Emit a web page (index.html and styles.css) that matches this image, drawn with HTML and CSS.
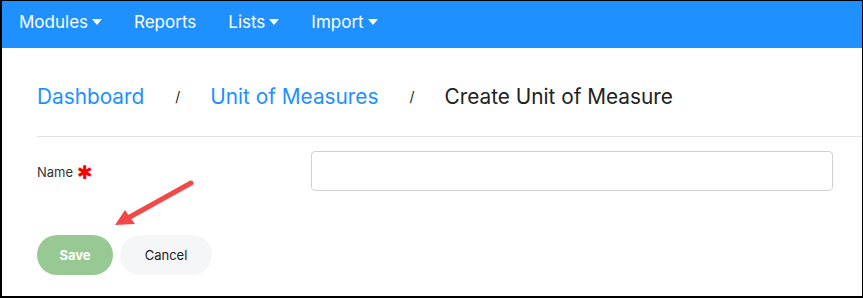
FILE: index.html
```html
<!DOCTYPE html>
<html lang="en">
<head>
    <meta charset="UTF-8">
    <title>Create Unit of Measure</title>
    <link rel="stylesheet" href="styles.css">
</head>
<body>
    <div class="frame">
        <div class="topbar">
            <span class="menu">Modules <i class="caret"></i></span>
            <span class="menu">Reports</span>
            <span class="menu">Lists <i class="caret"></i></span>
            <span class="menu">Import <i class="caret"></i></span>
        </div>

        <div class="content">
            <div class="crumbs">
                <a class="crumb">Dashboard</a>
                <span class="sep">/</span>
                <a class="crumb">Unit of Measures</a>
                <span class="sep">/</span>
                <span class="current">Create Unit of Measure</span>
            </div>

            <div class="form-row">
                <label class="label">Name <b class="req">✱</b></label>
                <input class="field" type="text">
            </div>

            <div class="actions">
                <button class="btn save">Save</button>
                <button class="btn cancel">Cancel</button>
            </div>
        </div>

        <!-- annotation arrow -->
        <svg class="arrow" width="100" height="60" viewBox="0 0 100 60">
            <line x1="89" y1="12" x2="26" y2="47" stroke="#f34848" stroke-width="5" stroke-linecap="round"/>
            <polygon points="13,54 23,39 33,53" fill="#f34848"/>
        </svg>
    </div>
</body>
</html>
```

FILE: styles.css
```css
body{
    margin: 0;
    font-family: "Inter", "Liberation Sans", sans-serif;
}

.frame{
    position: relative;
    width: 860px;
    height: 295px;
    border: 1px solid #000;
    border-left-width: 2px;
    border-bottom-width: 2px;
    background-color: #fff;
    overflow: hidden;
}

.topbar{
    height: 41px;
    padding-bottom: 6px;
    background-color: #1e90ff;
    display: flex;
    align-items: center;
    padding-left: 17px;
}
.menu{
    color: #fff;
    font-size: 17px;
    margin-right: 32px;
    display: flex;
    align-items: center;
}
.caret{
    display: inline-block;
    margin-left: 4px;
    border-top: 6px solid #fff;
    border-left: 5px solid transparent;
    border-right: 5px solid transparent;
}

.content{
    padding-left: 35px;
}

.crumbs{
    height: 80px;
    padding-top: 8px;
    display: flex;
    align-items: center;
    border-bottom: 1px solid #e1e1e8;
    font-size: 20.8px;
}
.crumb{
    color: #1e90ff;
}
.sep{
    color: #222;
    font-size: 14px;
    margin: 0 30px 0 31px;
}
.current{
    color: #222;
}

.form-row{
    display: grid;
    grid-template-columns: 274px 522px;
    align-items: center;
    margin-top: 14px;
}
.label{
    font-size: 13px;
    color: #333;
    display: flex;
    align-items: center;
    gap: 4px;
    padding-top: 2px;
}
.req{
    color: #f00;
    font-size: 19px;
    line-height: 1;
    font-family: "DejaVu Sans", sans-serif;
}
.field{
    height: 40px;
    box-sizing: border-box;
    border: 1px solid #cfd1d6;
    border-radius: 4px;
}

.actions{
    display: flex;
    gap: 7px;
    margin-top: 44px;
}
.btn{
    height: 40px;
    border-radius: 20px;
    border: 0;
    font-size: 13px;
    font-family: "Inter", "Liberation Sans", sans-serif;
}
.save{
    width: 76px;
    background-color: #98c994;
    color: #fff;
    font-weight: bold;
}
.cancel{
    width: 92px;
    background-color: #f5f6f8;
    color: #222;
}

.arrow{
    position: absolute;
    left: 100px;
    top: 170px;
}
```
